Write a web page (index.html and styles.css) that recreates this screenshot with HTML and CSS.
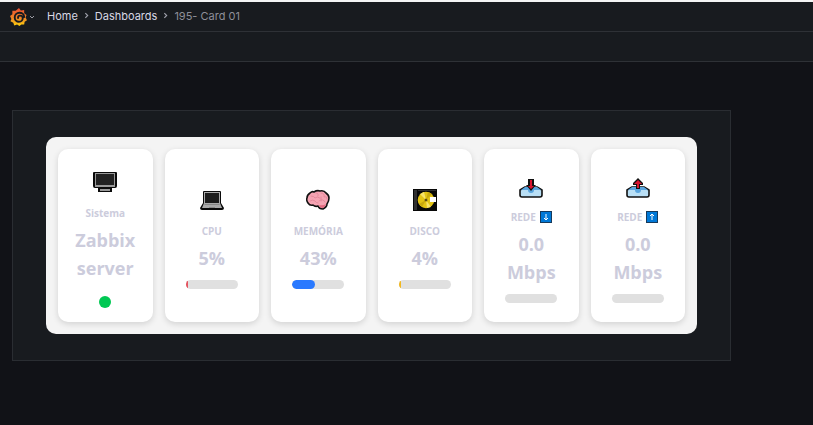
FILE: index.html
```html
<!DOCTYPE html>
<html lang="pt-BR">
<head>
<meta charset="utf-8">
<meta name="viewport" content="width=device-width, initial-scale=1">
<title>195- Card 01</title>
<link rel="stylesheet" href="styles.css">
</head>
<body>
<header class="topbar">
  <button class="brand" type="button" aria-label="Menu">
    <svg class="brand-logo" viewBox="0 0 36 38" aria-hidden="true">
      <defs><linearGradient id="flame" x1="0" y1="1" x2="0" y2="0"><stop offset="0" stop-color="#fcd20c"/><stop offset=".4" stop-color="#f08a24"/><stop offset="1" stop-color="#ee4f33"/></linearGradient></defs>
      <path fill="url(#flame)" d="M19 0l4 5 7-1 0 7 5 4-2 5 3 6-5 3-1 6-6 0-4 3-5-3-6 2-2-6-6-3 2-5-3-6 5-4 0-7 7 0z"/>
      <path fill="none" stroke="#181b1f" stroke-width="4" stroke-linecap="round" d="M30 19c0-6-5-9-10-9-6 0-10 5-10 10s4 9 9 9 8-4 8-8-3-5-6-5-4 2-4 5"/>
    </svg>
    <svg class="brand-caret" viewBox="0 0 6 4" aria-hidden="true"><path d="M1 1l2 2 2-2"/></svg>
  </button>
  <nav class="crumbs" aria-label="Breadcrumb">
    <a href="#">Home</a>
    <svg class="sep" viewBox="0 0 4 6" aria-hidden="true"><path d="M1 1l2 2-2 2"/></svg>
    <a href="#">Dashboards</a>
    <svg class="sep" viewBox="0 0 4 6" aria-hidden="true"><path d="M1 1l2 2-2 2"/></svg>
    <span class="current">195- Card 01</span>
  </nav>
</header>
<div class="toolbar"></div>
<main class="dashboard">
  <section class="panel">
    <div class="cards">
      <article class="card">
        <svg class="icon" viewBox="0 0 24 36" aria-hidden="true">
          <path fill="#0a0a0a" d="M1 8h22q1 0 1 1v13q0 2-2 2h-3v4H5v-4H2q-2 0-2-2V9q0-1 1-1z"/>
          <path fill="#999" d="M2 9h20v14H2zM7 25h10v2H7z"/>
          <path fill="#222" d="M3 10h18v11H3z"/><path fill="#0a0a0a" d="M8 23h8v2H8z"/>
        </svg>
        <h2 class="label">Sistema</h2>
        <p class="value">Zabbix server</p>
        <span class="status" role="img" aria-label="Online"></span>
      </article>
      <article class="card">
        <svg class="icon" viewBox="0 0 24 36" aria-hidden="true">
          <path fill="#0a0a0a" d="M4 9h16q1 0 1 1v11l3 5q0 2-2 2H2q-2 0-2-2l3-5V10q0-1 1-1z"/>
          <path fill="#aaa" d="M4 10h16v11l2 5H2l2-5z"/>
          <path fill="#1c1c1c" d="M5 11h14v10H5z"/><path fill="#888" d="M5 22h14l1 1H4zM9 25h6v1H9z"/>
        </svg>
        <h2 class="label">CPU</h2>
        <p class="value">5%</p>
        <div class="bar" role="img" aria-label="5%"><span class="fill red" style="width:5%"></span></div>
      </article>
      <article class="card">
        <svg class="icon" viewBox="0 0 24 36" aria-hidden="true">
          <path fill="#f5a3b2" stroke="#111" stroke-width="1.6" stroke-linejoin="round" d="M4 11q2-2 4-1 3-2 6-1 4-1 6 2 3 2 3 5t-2 6q0 3-4 5-4 0-5-3-3 1-5-1-3 1-5-2-2-3-1-5 0-3 3-5z"/>
          <path fill="#e26a80" d="M13 23q4 1 7-1-1 3-3 4-3 0-4-3z"/>
          <path fill="none" stroke="#e08496" stroke-width=".8" stroke-linecap="round" d="M5 14q3 0 4 2 2-2 5 0M10 11q3 0 2 3M15 11q4 0 3 4 3-1 3 2M4 19q3-2 5 0 1 2 3 2M13 19q4-3 6 1M15 15v4"/>
        </svg>
        <h2 class="label">MEMÓRIA</h2>
        <p class="value">43%</p>
        <div class="bar" role="img" aria-label="43%"><span class="fill blue" style="width:43%"></span></div>
      </article>
      <article class="card">
        <svg class="icon" viewBox="0 0 24 36" aria-hidden="true">
          <path fill="#080808" d="M0 7h24v22H0z"/><path fill="#303030" d="M1 8h3v20H1zM5 8h18v1H5z"/>
          <circle cx="13" cy="18" r="8.3" fill="#e3c414"/>
          <path fill="#f7e36a" d="M13 18L7 12l4-2zM13 18l5 7-4 1z"/>
          <path fill="#c9a90c" d="M13 18l2-8 4 2zM13 18l-7 4 3 3z"/>
          <circle cx="13" cy="18" r="1.6" fill="#8c7410"/><circle cx="13" cy="18" r=".8" fill="#222"/>
          <path fill="#fff" d="M17 15h6v5h-6z"/>
        </svg>
        <h2 class="label">DISCO</h2>
        <p class="value">4%</p>
        <div class="bar" role="img" aria-label="4%"><span class="fill amber" style="width:4%"></span></div>
      </article>
      <article class="card">
        <svg class="icon" viewBox="0 0 24 36" aria-hidden="true">
          <path fill="#b9dff5" stroke="#111" stroke-width="1.6" stroke-linejoin="round" d="M6 19h12l5 3v5q0 2-2 2H3q-2 0-2-2v-5z"/>
          <path fill="#5aa5de" d="M6 19h12l4 3h-7q0 3-3 3t-3-3H2z"/>
          <path fill="#111" d="M9 11h6v6h2l-5 6-5-6h2z"/>
          <path fill="#d8142f" d="M11 12h2v6h2l-3 3-3-3h2z"/>
        </svg>
        <h2 class="label">REDE <svg class="key" viewBox="0 0 12 12" role="img" aria-label="Download"><path fill="#163a5c" d="M0 0h12v12H0z"/><path fill="#0078d7" d="M1 1h10v10H1z"/><path class="arrow" d="M6 3v6M4 7l2 2 2-2"/></svg></h2>
        <p class="value">0.0 Mbps</p>
        <div class="bar" role="img" aria-label="0%"></div>
      </article>
      <article class="card">
        <svg class="icon" viewBox="0 0 24 36" aria-hidden="true">
          <path fill="#b9dff5" stroke="#111" stroke-width="1.6" stroke-linejoin="round" d="M6 19h12l5 3v5q0 2-2 2H3q-2 0-2-2v-5z"/>
          <path fill="#5aa5de" d="M6 19h12l4 3h-7q0 3-3 3t-3-3H2z"/>
          <path fill="#111" d="M10 21h4v-4h3v-2l-5-5-5 5v2h3z"/>
          <path fill="#d8142f" d="M11 20h2v-4h3l-4-4-4 4h3z"/>
        </svg>
        <h2 class="label">REDE <svg class="key" viewBox="0 0 12 12" role="img" aria-label="Upload"><path fill="#163a5c" d="M0 0h12v12H0z"/><path fill="#0078d7" d="M1 1h10v10H1z"/><path class="arrow" d="M6 9V3M4 5l2-2 2 2"/></svg></h2>
        <p class="value">0.0 Mbps</p>
        <div class="bar" role="img" aria-label="0%"></div>
      </article>
    </div>
  </section>
</main>
</body>
</html>
```
FILE: styles.css
```css
* { box-sizing: border-box; }

body {
  margin: 0;
  background: #111217;
  font-family: "Open Sans", "Noto Sans", sans-serif;
}

.topbar {
  display: flex;
  align-items: center;
  gap: 12px;
  height: 32px;
  padding: 0 10px 2px;
  border-top: 2px solid #f4f5f5;
  border-bottom: 1px solid #2e3136;
  background: #181b1f;
  font: 400 11px/16px Inter, sans-serif;
}

.brand {
  display: flex;
  align-items: center;
  gap: 2px;
  padding: 2px 0 0;
  border: 0;
  background: none;
}

.brand-logo { width: 17px; height: 18px; }

.brand-caret {
  width: 6px;
  height: 4px;
  fill: none;
  stroke: #9a9ba3;
}

.crumbs {
  display: flex;
  align-items: center;
  gap: 6px;
}

.crumbs a {
  color: #d8d8e4;
  text-decoration: none;
}

.current { color: #8e8f99; }

.sep {
  width: 5px;
  height: 7px;
  fill: none;
  stroke: #a0a1ab;
}

.toolbar {
  height: 30px;
  border-bottom: 1px solid #2e3136;
  background: #181b1f;
}

.dashboard { padding: 48px 82px 48px 12px; }

.panel {
  padding: 26px 33px;
  border: 1px solid #2a2d32;
  background: #181b1f;
}

.cards {
  display: grid;
  grid-template-columns: repeat(6, minmax(0, 1fr));
  gap: 12px;
  padding: 12px;
  border-radius: 10px;
  background: #f4f4f4;
}

.card {
  display: flex;
  flex-direction: column;
  align-items: center;
  justify-content: center;
  min-height: 173px;
  padding: 12px;
  border-radius: 10px;
  background: #fff;
  box-shadow: 0 2px 6px rgba(0, 0, 0, 0.14);
  color: #ccccdc;
  text-align: center;
}

.icon {
  width: 24px;
  height: 36px;
}

.label {
  display: flex;
  align-items: center;
  gap: 4px;
  margin: 4px 0;
  font-size: 10px;
  font-weight: 700;
  line-height: 18px;
}

.key {
  width: 12px;
  height: 12px;
}

.arrow {
  fill: none;
  stroke: #fff;
}

.value {
  margin: 0;
  font-size: 18px;
  font-weight: 700;
  line-height: 28px;
}

.status {
  width: 12px;
  height: 12px;
  margin-top: 14px;
  border-radius: 50%;
  background: #00c853;
}

.bar {
  width: 52px;
  height: 9px;
  margin-top: 8px;
  overflow: hidden;
  border-radius: 5px;
  background: #e0e0e0;
}

.fill {
  display: block;
  height: 100%;
}

.red { background: #e5535f; }
.blue { border-radius: 5px; background: #2979ff; }
.amber { background: #f2b81f; }
```
